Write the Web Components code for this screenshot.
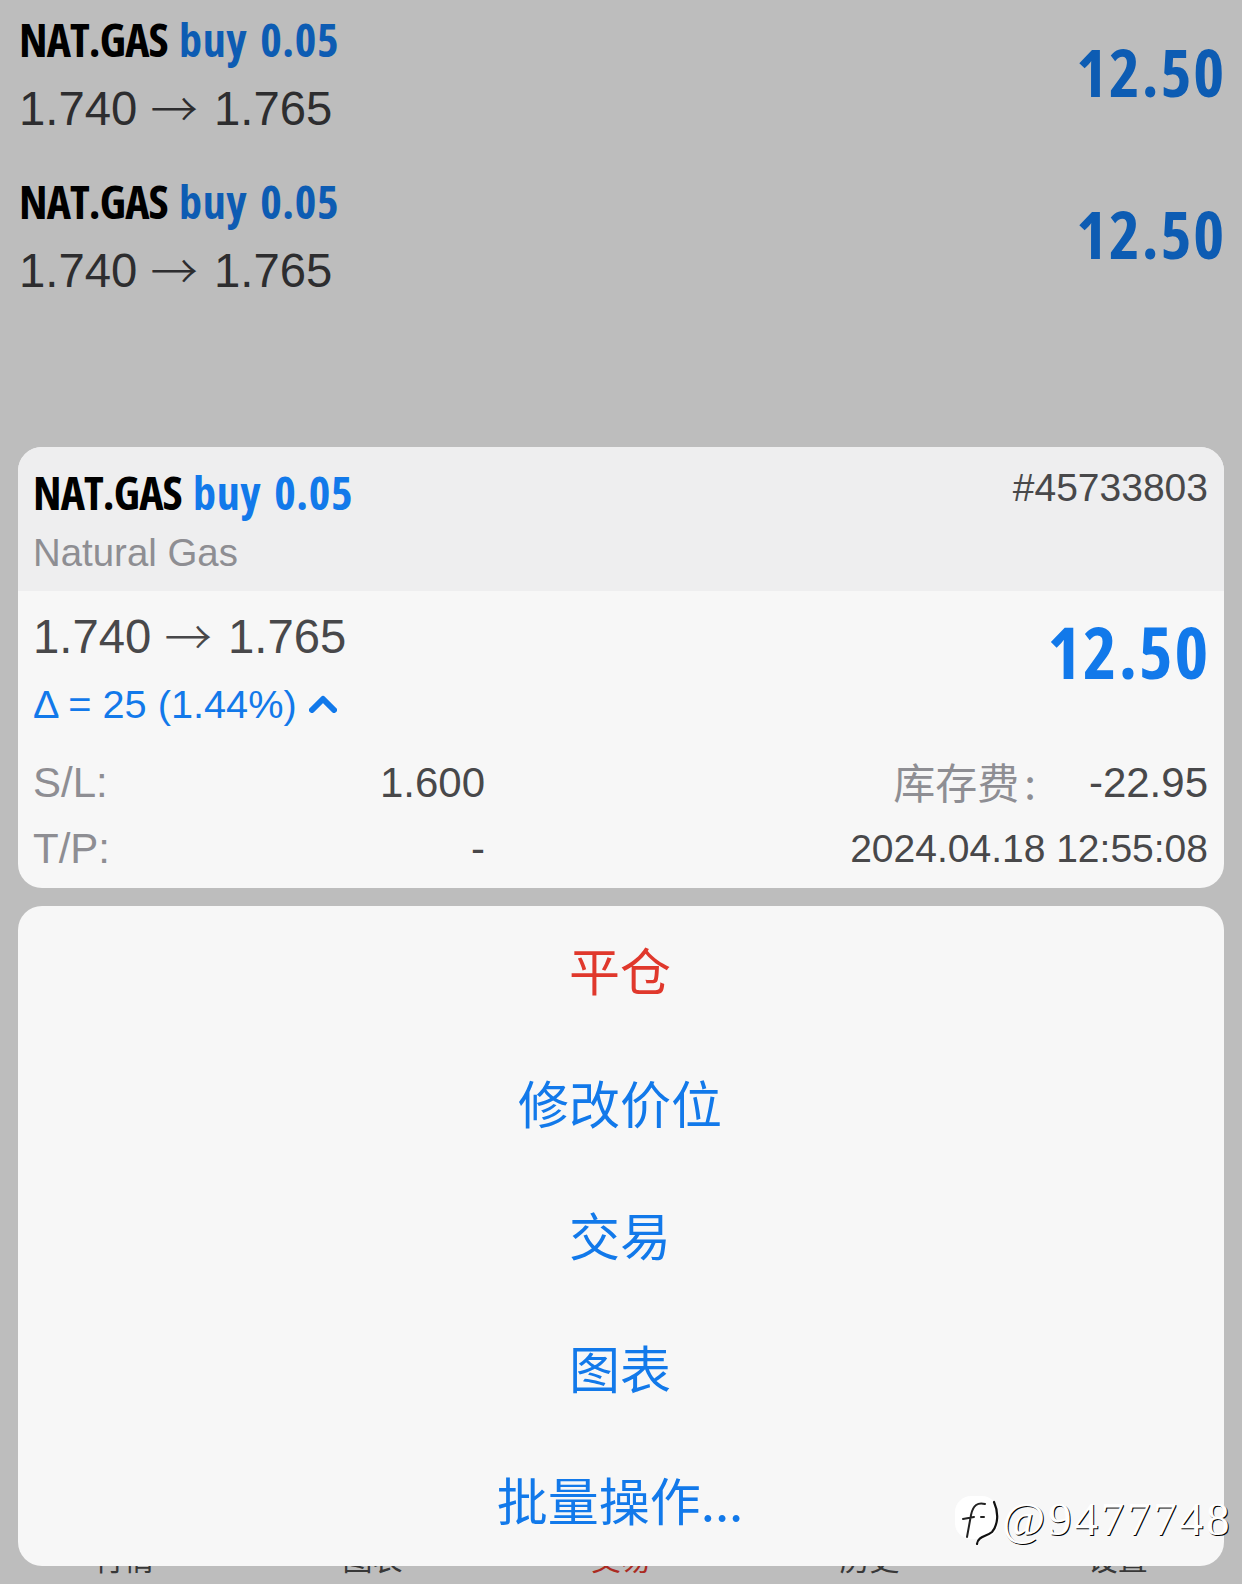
<!DOCTYPE html>
<html>
<head>
<meta charset="utf-8">
<style>
html, body { margin: 0; padding: 0; }
body { width: 1242px; height: 1584px; overflow: hidden; background: #f7f7f7; font-family: "Liberation Sans", "Noto Sans CJK SC", sans-serif; }
</style>
</head>
<body>
<trade-screen>
	<position-row></position-row>
	<position-row></position-row>
	<tab-bar slot="tabs"></tab-bar>
	<position-card slot="overlay"></position-card>
	<action-sheet slot="overlay"></action-sheet>
	<water-mark slot="mark"></water-mark>
</trade-screen>
<script>
const condensed = `font-family: "Open Sans", "Liberation Sans", sans-serif; font-weight: 700; font-stretch: 75%;`;
const arrow = `<span style="font-family:'Noto Sans CJK SC',sans-serif;font-weight:300;vertical-align:-2px;margin-right:3px">→</span>`;

customElements.define('trade-screen', class extends HTMLElement {
	constructor() {
		super();
		this.attachShadow({mode: 'open'}).innerHTML = `<style>
:host { display: flex; flex-direction: column; width: 1242px; height: 1584px; position: relative; overflow: hidden; }
.list { flex: 1 1 auto; }
.dim { position: absolute; inset: 0; background: rgba(0,0,0,.235); }
.overlay { position: absolute; left: 18px; right: 18px; top: 447px; display: flex; flex-direction: column; gap: 18px; }
</style>
<div class="list"><slot></slot></div>
<slot name="tabs"></slot>
<div class="dim"></div>
<div class="overlay"><slot name="overlay"></slot></div>
<slot name="mark"></slot>`;
	}
});

customElements.define('position-row', class extends HTMLElement {
	constructor() {
		super();
		this.attachShadow({mode: 'open'}).innerHTML = `<style>
:host { display: flex; justify-content: space-between; align-items: flex-start; height: 162px; padding: 0 18px 0 19px; }
.title { font-size: 46px; line-height: 62px; letter-spacing: -.9px; word-spacing: 4px; color: #000; margin-top: 8px; ${condensed} }
.title b { color: #1279ea; font-weight: inherit; letter-spacing: .6px; }
.price { font-size: 47.3px; line-height: 68px; color: #3c3c3e; margin-top: 3px; }
.profit { font-size: 66px; line-height: 90px; letter-spacing: 1.8px; color: #1279ea; margin-top: 26px; margin-right: -2px; ${condensed} }
</style>
<div>
	<div class="title">NAT.GAS <b>buy 0.05</b></div>
	<div class="price">1.740 ${arrow} 1.765</div>
</div>
<div class="profit">12.50</div>`;
	}
});

customElements.define('tab-bar', class extends HTMLElement {
	constructor() {
		super();
		this.attachShadow({mode: 'open'}).innerHTML = `<style>
:host { display: flex; height: 60px; flex: 0 0 auto; }
span { flex: 1 1 0; text-align: center; font-size: 30px; line-height: 36px; color: #4a4a4a; padding-top: 15px; font-family: "Noto Sans CJK SC", sans-serif; }
.on { color: #e0382c; }
</style>
<span>行情</span><span>图表</span><span class="on">交易</span><span>历史</span><span>设置</span>`;
	}
});

customElements.define('position-card', class extends HTMLElement {
	constructor() {
		super();
		this.attachShadow({mode: 'open'}).innerHTML = `<style>
:host { display: block; height: 441px; border-radius: 24px; overflow: hidden; background: #f7f7f7; color: #48484a; }
.head { height: 144px; box-sizing: border-box; background: #eeeeef; padding: 14px 16px 0 15px; display: flex; justify-content: space-between; align-items: flex-start; }
.title { font-size: 46px; line-height: 62px; letter-spacing: -.9px; word-spacing: 4px; color: #000; ${condensed} }
.title b { color: #1279ea; font-weight: inherit; letter-spacing: .6px; }
.name { font-size: 38.4px; line-height: 56px; color: #8e8e93; margin-top: 2px; }
.ticket { font-size: 39px; line-height: 50px; margin-top: 2px; }
.body { padding: 13px 16px 0 15px; }
.top { display: flex; justify-content: space-between; height: 153px; }
.price { font-size: 47.3px; line-height: 62px; }
.delta { font-size: 39.7px; line-height: 60px; color: #1279ea; display: flex; align-items: center; gap: 12px; margin-top: 6px; }
.profit { font-size: 72px; color: #1279ea; line-height: 92px; letter-spacing: 1.8px; margin-top: 1px; margin-right: -2px; ${condensed} }
.grid { display: grid; grid-template-columns: 452px 1fr; row-gap: 14px; font-size: 42px; line-height: 52px; }
.pair { display: flex; justify-content: space-between; }
.pair i { font-style: normal; color: #8e8e93; }
.right { display: flex; justify-content: flex-end; gap: 53px; }
.right i { font-style: normal; color: #8e8e93; font-family: "Noto Sans CJK SC", sans-serif; margin-top: -2px; }
.right i b { font-weight: inherit; margin-left: 5px; }
.date { font-size: 39px; }
</style>
<div class="head">
	<div>
		<div class="title">NAT.GAS <b>buy 0.05</b></div>
		<div class="name">Natural Gas</div>
	</div>
	<div class="ticket">#45733803</div>
</div>
<div class="body">
	<div class="top">
		<div>
			<div class="price">1.740 ${arrow} 1.765</div>
			<div class="delta"><span>Δ = 25 (1.44%)</span><svg width="28" height="18" viewBox="0 0 28 18"><path d="M3 15 14 4l11 11" fill="none" stroke="#1279ea" stroke-width="6" stroke-linecap="round" stroke-linejoin="round"/></svg></div>
		</div>
		<div class="profit">12.50</div>
	</div>
	<div class="grid">
		<div class="pair"><i>S/L:</i><span>1.600</span></div>
		<div class="right"><i>库存费<b>:</b></i><span>-22.95</span></div>
		<div class="pair"><i>T/P:</i><span>-</span></div>
		<div class="right date"><span>2024.04.18 12:55:08</span></div>
	</div>
</div>`;
	}
});

customElements.define('action-sheet', class extends HTMLElement {
	constructor() {
		super();
		this.attachShadow({mode: 'open'}).innerHTML = `<style>
:host { display: block; height: 660px; border-radius: 24px; background: #f7f7f7; font-family: "Noto Sans CJK SC", sans-serif; }
div { height: 132.5px; box-sizing: border-box; padding: 0 2px 6px 0; display: flex; align-items: center; justify-content: center; font-size: 51px; color: #1279ea; }
.close { color: #e0382c; }
</style>
<div class="close">平仓</div><div>修改价位</div><div>交易</div><div>图表</div><div>批量操作...</div>`;
	}
});

customElements.define('water-mark', class extends HTMLElement {
	constructor() {
		super();
		this.attachShadow({mode: 'open'}).innerHTML = `<style>
:host { position: absolute; left: 950px; top: 1491px; display: flex; align-items: center; }
span { font-family: "Liberation Serif", serif; font-size: 47px; line-height: 40px; color: #fff; text-shadow: 1px .5px 0 #000; letter-spacing: 2.8px; }
</style>
<svg width="52" height="56" viewBox="0 0 52 56"><rect x="5" y="5" width="43" height="43" rx="16" fill="#fff"/><g fill="none" stroke-linecap="round"><path d="M35 13C28 11 23 14 21 24L17 46M13 28 24 26M31 26h3" stroke="#222" stroke-width="2"/><path d="M44 11C49 22 48 34 42 41 36 46 28 45 27 53" stroke="#111" stroke-width="2.2"/></g></svg>
<span>@9477748</span>`;
	}
});
</script>
</body>
</html>
